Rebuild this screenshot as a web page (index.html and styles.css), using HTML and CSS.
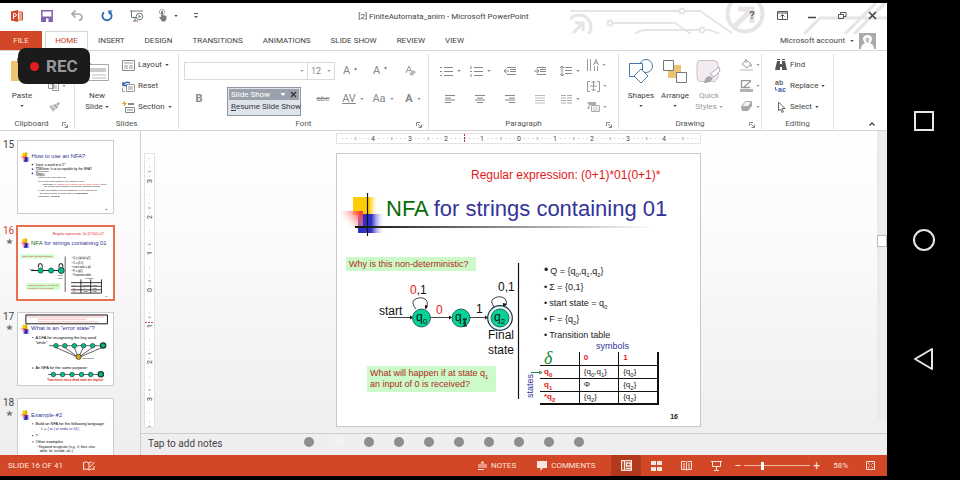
FILE: index.html
```html
<!DOCTYPE html>
<html lang="en">
<head>
<meta charset="utf-8">
<title>FiniteAutomata_anim - Microsoft PowerPoint</title>
<link rel="stylesheet" href="styles.css">
</head>
<body>
<svg class="sprite" aria-hidden="true">
  <symbol id="caret" viewBox="0 0 5 3"><path d="M0 0h5L2.500 3z" fill="currentColor"/></symbol>
  <symbol id="launch" viewBox="0 0 6 6"><path d="M.5 4V.5H4M2 2l3 3M5.500 2.500v3h-3" fill="none" stroke="currentColor"/></symbol>
  <symbol id="star" viewBox="0 0 10 10"><path d="M5 .5l1.300 3H10L7.200 5.600l1 3.400L5 7.200 1.800 9l1-3.400L0 3.500h3.700z" fill="currentColor"/></symbol>
  <symbol id="motif" viewBox="0 0 44 44">
    <rect x="12" y="5" width="25" height="18" fill="url(#gy)"/>
    <rect x="17" y="22" width="27" height="19" fill="url(#gb)"/>
    <rect x="0" y="19" width="22" height="17" fill="url(#gr)"/>
    <path d="M26.500 1v43" stroke="#111" stroke-width="1.200"/>
  </symbol>
</svg>
<svg class="sprite" aria-hidden="true">
  <defs>
    <linearGradient id="gy"><stop offset=".65" stop-color="#fecb05"/><stop offset="1" stop-color="#fff6c8" stop-opacity="0"/></linearGradient>
    <linearGradient id="gb"><stop offset=".5" stop-color="#3030c8"/><stop offset="1" stop-color="#fff" stop-opacity="0"/></linearGradient>
    <linearGradient id="gr" x1="1" y1="0" x2="0" y2=".6"><stop offset=".1" stop-color="#ff3838"/><stop offset="1" stop-color="#fff" stop-opacity="0"/></linearGradient>
    <linearGradient id="gl"><stop offset="0" stop-color="#111"/><stop offset=".4" stop-color="#777"/><stop offset="1" stop-color="#fff"/></linearGradient>
  </defs>
</svg>

<div class="app">
  <header class="titlebar">
    <svg class="circuit" viewBox="570 3 317 31" aria-hidden="true">
      <g fill="none" stroke="#e6e4e6" stroke-width="2">
        <path d="M570 11h110M685 11h15l32 22M613 23h62l16 11M635 34q4-4 12-4h52M704 30h6l10 4"/>
        <circle cx="682" cy="11" r="2.500"/><circle cx="610" cy="23" r="2.500"/><circle cx="702" cy="30" r="2.500"/>
        <circle cx="745" cy="14" r="17.500" stroke-width="4"/><circle cx="579" cy="27" r="12" stroke-width="3"/>
        <path d="M735 26l16-16M738 9h14v14" stroke-width="5"/><path d="M573 33l8-8M575 23h8v8" stroke-width="3"/>
        <path d="M804 34l16-16h67M845 34l31-31M854 34l31-31" stroke-width="3"/>
      </g>
    </svg>
    <div class="quick">
      <button aria-label="PowerPoint"><svg width="12" height="12"><path d="M0 1.500L7 0v12L0 10.500z" fill="#d24726"/><path d="M7 2h4.500v8H7M8 4h3M8 6h3M8 8h3" fill="none" stroke="#d24726"/><path d="M2.500 9V3.500h1.300q1.500 0 1.500 1.500T3.800 6.500H2.500" fill="none" stroke="#fff"/></svg></button>
      <button aria-label="Save"><svg width="12" height="12"><path d="M.8.8h10.400v10.400H.8z" fill="#fff" stroke="#8462ad" stroke-width="1.500"/><path d="M1 6.500h10V11H1z" fill="#8462ad"/><path d="M5 8.500h2.500V12H5z" fill="#fff"/></svg></button>
      <button aria-label="Undo"><svg width="12" height="12"><path d="M4.500.5L1 4l3.500 3.500M1 4h6q4 0 4 3t-3 3.500" fill="none" stroke="#aaa" stroke-width="1.700"/></svg></button>
      <button aria-label="Repeat"><svg width="12" height="12"><path d="M3 2.200a4.600 4.600 0 1 0 6 0" fill="none" stroke="#2f6db5" stroke-width="1.800"/><path d="M7 .5h4.500L8 5z" fill="#2f6db5"/></svg></button>
      <button aria-label="Start from beginning"><svg width="14" height="12"><path d="M0 1h13M1.500 1v6.500H6M5 8v3M3 11h5" fill="none" stroke="#777"/><circle cx="9.500" cy="6.500" r="3.300" fill="#fff" stroke="#777"/><path d="M8.500 4.700l3 1.800-3 1.800z" fill="#5c9a78"/></svg></button>
      <button class="touch" aria-label="Touch mode"><svg width="10" height="13"><path d="M3 8V2.500q1-1.500 2 0V6l3.500 1v3L7 12.500H4L1 8z" fill="#7c7c80"/><circle cx="4" cy="3" r="2.600" fill="none" stroke="#aaa"/></svg><svg class="caret"><use href="#caret"/></svg></button>
      <button class="more" aria-label="Customize"><svg width="5" height="6"><path d="M0 .5h4" stroke="#555"/><path d="M0 3h4L2 5z" fill="#555"/></svg></button>
    </div>
    <h1>[2] FiniteAutomata_anim - Microsoft PowerPoint</h1>
    <div class="window">
      <button class="help">?</button>
      <button aria-label="Ribbon display"><svg width="11" height="9"><path d="M.5.5h10v8H.5zM.5 2h10M5.500 8V4M3.500 5.500l2-2 2 2" fill="none" stroke="#555"/></svg></button>
      <button aria-label="Minimize"><svg width="9" height="9"><path d="M0 6.500h8" stroke="#444" stroke-width="1.500"/></svg></button>
      <button aria-label="Restore"><svg width="9" height="8"><path d="M.5 2.500h5v4h-5zM2.500 2V.5h5.500v4H6" fill="none" stroke="#555"/></svg></button>
      <button aria-label="Close"><svg width="9" height="9"><path d="M1 1l7 7M8 1L1 8" stroke="#444" stroke-width="1.500"/></svg></button>
    </div>
  </header>

  <nav class="tabs">
    <button class="file">FILE</button><button class="on">HOME</button><button>INSERT</button><button>DESIGN</button><button>TRANSITIONS</button><button>ANIMATIONS</button><button>SLIDE SHOW</button><button>REVIEW</button><button>VIEW</button>
    <button class="account">Microsoft account <svg class="caret"><use href="#caret"/></svg>
      <svg width="17" height="16"><path d="M0 0h17v16H0z" fill="#aaa"/><path d="M2 16q0-5 4-5.500Q4 8 4 5.500 4.500 2 8.500 2T13 5.500q0 2.500-2 5 4 .5 4 5.500z" fill="#fff"/><path d="M6.500 7.500V5q2 0 2.500-1 .5 1 1.500 1.500v2Q10 10 8.500 10T6.500 7.500z" fill="#c6c6c6"/></svg></button>
  </nav>

  <section class="ribbon">
    <div class="group clipboard">
      <div class="body">
        <button class="big paste"><svg width="24" height="26"><path d="M1 3h20v20H1z" fill="#ecc573"/><path d="M7 0h8v5H7z" fill="#777"/></svg><span>Paste</span><svg class="caret"><use href="#caret"/></svg></button>
        <div class="stack">
          <button aria-label="Cut"><svg width="11" height="10"><path d="M2 1l6 8M9 1L3 9" stroke="#bbb"/></svg></button>
          <button class="dim" aria-label="Copy"><svg width="11" height="10"><path d="M.5.5h5v7h-5zM4.500 2.500h6v7h-6zM6 5h3M6 7h3M2 3h2" fill="none" stroke="currentColor"/></svg><svg class="caret"><use href="#caret"/></svg></button>
          <button class="dim" aria-label="Format painter"><svg width="12" height="10"><path d="M1 4l3-1 4 4-3 3z" fill="#c3bfc1"/><path d="M5 3l2-1 3 3-1 2zM8 2l3-2 .8 1L10 4z" fill="#a9a6a8"/></svg></button>
        </div>
      </div>
      <h2>Clipboard<svg class="launch"><use href="#launch"/></svg></h2>
    </div>
    <div class="group slides">
      <div class="body">
        <button class="big"><svg width="26" height="26"><path d="M2.500 6.500h22v16h-22z" fill="#fff" stroke="#aaa"/><path d="M5 10h17v4H5z" fill="#ccc"/><path d="M8 17h14M8 20h14" stroke="#bbb"/><path d="M3 2v7M0 5.500h7M1 3l5 5" stroke="#e8a94a"/></svg><span>New<br>Slide <svg class="caret"><use href="#caret"/></svg></span></button>
        <div class="stack wide">
          <button><svg width="13" height="11"><path d="M.5.5h12v10H.5z" fill="#fff" stroke="#8a8a8a"/><path d="M2 3h9M2 6h4M2 8h4" stroke="#999"/><path d="M7 5h4v4H7z" fill="#ccc"/></svg>Layout <svg class="caret"><use href="#caret"/></svg></button>
          <button><svg width="13" height="11"><path d="M4.500 3.500h8v7h-8zM6 6h5M6 8h5M.5 6.500v4H3" fill="none" stroke="#999"/><path d="M1 5V1M1 4.500h4M1 4q3-4 7-2" fill="none" stroke="#2f6db5" stroke-width="1.500"/></svg>Reset</button>
          <button><svg width="13" height="12"><path d="M3.500 6.500h9v5h-9zM5 9h6" fill="none" stroke="#888"/><path d="M6 3h6" stroke="#888" stroke-width="2"/><path d="M2.500 0v5M0 2.500h5M1 1l3 3" stroke="#e8a94a"/></svg>Section <svg class="caret"><use href="#caret"/></svg></button>
        </div>
      </div>
      <h2>Slides</h2>
    </div>
    <div class="group font">
      <div class="body rows">
        <div class="row">
          <label class="combo name"><select aria-label="Font"><option></option></select><svg class="caret"><use href="#caret"/></svg></label><label class="combo size"><select aria-label="Font size"><option>12</option></select><svg class="caret"><use href="#caret"/></svg></label>
          <button class="glyph">A<sup>▴</sup></button><button class="glyph">A<sup>▾</sup></button><button aria-label="Clear formatting"><svg width="11" height="12"><path d="M1 8l3-7 3 7M2 5.500h4" fill="none" stroke="#999"/><path d="M4 9l4-4 3 2-4 4z" fill="#b9b5b7"/></svg></button>
        </div>
        <div class="row">
          <button class="glyph bold">B</button>
          <button class="strike">abc</button><button class="glyph av">AV <svg class="caret"><use href="#caret"/></svg></button><button class="glyph">Aa <svg class="caret"><use href="#caret"/></svg></button><button class="glyph bold">A <svg class="caret"><use href="#caret"/></svg></button>
        </div>
        <div class="floatbar">
          <div class="floathead">Slide Show<svg class="caret"><use href="#caret"/></svg><svg width="7" height="7"><path d="M1 1l5 5M6 1L1 6" stroke="#333" stroke-width="1.200"/></svg></div>
          <button><span><u>R</u>esume Slide Show</span></button>
        </div>
      </div>
      <h2>Font<svg class="launch"><use href="#launch"/></svg></h2>
    </div>
    <div class="group paragraph">
      <div class="body">
        <div class="rows">
          <div class="row">
            <button aria-label="Bullets"><svg width="13" height="11"><path d="M4 1.500h9M4 5.500h9M4 9.500h9M0 1.500h2M0 5.500h2M0 9.500h2" stroke="currentColor"/></svg><svg class="caret"><use href="#caret"/></svg></button>
            <button aria-label="Numbering"><svg width="13" height="11"><path d="M4 1.500h9M4 5.500h9M4 9.500h9M1 0v3M0 5.500h2M1 8v3" stroke="currentColor"/></svg><svg class="caret"><use href="#caret"/></svg></button>
            <button aria-label="Decrease indent"><svg width="12" height="8"><path d="M3 .5h9M6 2.500h6M6 4.500h6M3 7.500h9M0 4h5M2.500 1.500L0 4l2.500 2.500" fill="none" stroke="currentColor"/></svg></button>
            <button aria-label="Increase indent"><svg width="12" height="8"><path d="M3 .5h9M6 2.500h6M6 4.500h6M3 7.500h9M0 4h5M2.500 1.500L5 4 2.500 6.500" fill="none" stroke="currentColor"/></svg></button>
            <button aria-label="Line spacing"><svg width="12" height="12"><path d="M5 2.500h7M5 5.500h7M5 8.500h7M2 1v10M0 3l2-2 2 2M0 9l2 2 2-2" fill="none" stroke="currentColor"/></svg><svg class="caret"><use href="#caret"/></svg></button>
          </div>
          <div class="row">
            <button aria-label="Align left"><svg width="10" height="8"><path d="M0 .5h10M0 3h6M0 5h10M0 7.500h6" stroke="currentColor"/></svg></button>
            <button aria-label="Center"><svg width="10" height="8"><path d="M0 .5h10M2 3h6M0 5h10M2 7.500h6" stroke="currentColor"/></svg></button>
            <button aria-label="Align right"><svg width="10" height="8"><path d="M0 .5h10M4 3h6M0 5h10M4 7.500h6" stroke="currentColor"/></svg></button>
            <button aria-label="Justify"><svg width="10" height="9"><path d="M0 .5h10M0 3h10M0 5.500h10M0 8h10" stroke="#bbb"/></svg></button>
            <button aria-label="Columns"><svg width="11" height="9"><path d="M0 .5h5M0 3h5M0 5.500h5M0 8h5M6 .5h5M6 3h5M6 5.500h5M6 8h5" stroke="#aaa"/></svg><svg class="caret"><use href="#caret"/></svg></button>
          </div>
        </div>
        <div class="stack">
          <button aria-label="Text direction"><svg width="12" height="13"><path d="M.5 0v12M3.500 0v12M7.500 7v5M10.500 7v5M6.500 6L9 .5 11.500 6M7 4h4" fill="none" stroke="currentColor"/></svg><svg class="caret"><use href="#caret"/></svg></button>
          <button aria-label="Align text"><svg width="13" height="11"><path d="M3 .5H.5v10H3M10 .5h2.500v10H10M6.500 0v10M4.500 2l2-2 2 2M4.500 8l2 2 2-2M3 5h7" fill="none" stroke="currentColor"/></svg><svg class="caret"><use href="#caret"/></svg></button>
          <button aria-label="SmartArt"><svg width="13" height="11"><path d="M0 1h9v3H3l-1 4H0l2-4z" fill="#aaa"/><path d="M4.500 4.500h8v6h-8z" fill="#f6eff4" stroke="#aaa"/><path d="M6 7h5M6 9h5" stroke="#ccc"/></svg><svg class="caret"><use href="#caret"/></svg></button>
        </div>
      </div>
      <h2>Paragraph<svg class="launch"><use href="#launch"/></svg></h2>
    </div>
    <div class="group drawing">
      <div class="body">
        <button class="big"><svg width="24" height="26"><g fill="#fff" stroke="#4878a8"><circle cx="17" cy="8" r="6.500"/><path d="M.5 5.500h13v13H.5z"/><path d="M12 11l7 7-7 7-7-7z"/></g></svg><span>Shapes</span><svg class="caret"><use href="#caret"/></svg></button>
        <button class="big"><svg width="24" height="26"><path d="M9 7h9v7H9zM5 12h9v8H5z" fill="#eac374"/><path d="M.5 2.500h10v10H.5zM13.500 14.500h10v10h-10z" fill="#fff" stroke="#777"/></svg><span>Arrange</span><svg class="caret"><use href="#caret"/></svg></button>
        <button class="big faded"><svg width="26" height="26"><path d="M4 2.500h14q4 0 4 4v13l-3 4H5q-4 0-4-4v-13q0-4 3-4z" fill="#f3ebf2" stroke="#c9c0c8"/><path d="M8 25q1-6 5-7l4 2q-2 5-9 5z" fill="#aaa5a9"/><path d="M14 16l9-7 1 4-6 6z" fill="#fff" stroke="#aaa"/></svg><span>Quick<br>Styles <svg class="caret"><use href="#caret"/></svg></span></button>
        <div class="stack">
          <button aria-label="Shape fill"><svg width="13" height="12"><path d="M6 1l5 4-4 4-5-4zM6 0v4M11 5v3" fill="none" stroke="currentColor"/><path d="M0 10h13v2H0z" fill="#ddd8dc"/></svg><svg class="caret"><use href="#caret"/></svg></button>
          <button aria-label="Shape outline"><svg width="13" height="12"><path d="M11 .5H1.500v7H10M4 7l7-6" fill="none" stroke="currentColor" stroke-width="1.300"/><path d="M0 9h13v3H0z" fill="#b5b0b3"/></svg><svg class="caret"><use href="#caret"/></svg></button>
          <button aria-label="Shape effects"><svg width="13" height="11"><path d="M1 6l4-5h7v4L8 10H2z" fill="#aaa5a8"/><path d="M1.500 5.500l4-5h6l-3 5z" fill="#f4f1f3" stroke="#aaa"/></svg><svg class="caret"><use href="#caret"/></svg></button>
        </div>
      </div>
      <h2>Drawing<svg class="launch"><use href="#launch"/></svg></h2>
    </div>
    <div class="group editing">
      <div class="body">
        <div class="stack wide">
          <button><svg width="12" height="12"><path d="M0 11l2-9h3v3h2V2h3l2 9H7V8H5v3zM2 0h3v1H2zM7 0h3v1H7z" fill="#555"/></svg>Find</button>
          <button><svg width="12" height="12"><text x="0" y="5" class="mini">ab</text><text x="3" y="12" class="mini blue">ac</text><path d="M.5 7v3h2" fill="none" stroke="#4878b8"/></svg>Replace<svg class="caret"><use href="#caret"/></svg></button>
          <button><svg width="12" height="12"><path d="M3.500 1v9l2-2 1.500 3.500 1.500-.8L7 7.500h3z" fill="#fff" stroke="#666"/></svg>Select<svg class="caret"><use href="#caret"/></svg></button>
        </div>
      </div>
      <h2>Editing</h2>
    </div>
    <button class="collapse" aria-label="Collapse ribbon"><svg width="6" height="4"><path d="M.5 3.500L3 1l2.500 2.500" fill="none" stroke="#444" stroke-width="1.300"/></svg></button>
  </section>

  <main class="work">
    <ol class="thumbs">
      <li><div class="num">15</div>
        <svg class="thumb" viewBox="0 0 290 220" role="img" aria-label="How to use an NFA?">
          <use href="#motif" x="4" y="32" width="34" height="34"/><path d="M12 61h218" stroke="url(#gl)" stroke-width="2"/>
          <text x="41" y="53" class="t-title">How to use an NFA?</text>
          <g fill="#2b2bb0"><circle cx="44" cy="72" r="2.500"/><circle cx="44" cy="86" r="2.500"/><circle cx="44" cy="99" r="2.500"/></g>
          <g class="t-body"><text x="54" y="77"><tspan text-decoration="underline">Input</tspan>: a word w in Σ*</text><text x="54" y="90"><tspan text-decoration="underline">Question</tspan>: Is w acceptable by the NFA?</text><text x="54" y="103" text-decoration="underline">Steps:</text></g>
          <g class="t-fine"><text x="60" y="114">• Start at the &quot;start state&quot; q0</text><text x="60" y="125">• For every input symbol in the sequence w do</text><text x="72" y="135">◦ Determine <tspan class="r">all possible next states from all current states</tspan>, given</text><text x="80" y="142">the current input symbol in w and the transition function</text><text x="60" y="153">• If after all symbols in w are consumed <tspan class="r">and</tspan> at least one of</text><text x="66" y="161">the current states is a final state then <tspan font-weight="bold">accept w</tspan>;</text><text x="60" y="171">• Otherwise, <tspan font-weight="bold">reject w</tspan>.</text><text x="266" y="212">15</text></g>
        </svg></li>
      <li class="current"><div class="num">16<svg class="mark"><use href="#star"/></svg></div>
        <svg class="thumb" viewBox="0 0 290 220" role="img" aria-label="NFA for strings containing 01">
          <text x="106" y="24" class="t-reg r">Regular expression: (0+1)*01(0+1)*</text>
          <use href="#motif" x="4" y="32" width="34" height="34"/><path d="M12 61h248" stroke="url(#gl)" stroke-width="2"/>
          <text x="40" y="54" class="t-title"><tspan fill="#0a6b0a">NFA</tspan> for strings containing 01</text>
          <path d="M8 84h104v12H8zM26 172h103v19H26z" fill="#ccfac9"/>
          <text x="12" y="93" class="t-fine r">Why is this non-deterministic?</text><text x="30" y="180" class="t-fine r">What will happen if at state q1</text><text x="30" y="188" class="t-fine r">an input of 0 is received?</text>
          <path d="M144 90v108" stroke="#111" stroke-width="2"/><path d="M40 133h90M62 124q-2-12 6-12t6 12M125 124q-2-12 6-12t6 12" fill="none" stroke="#111" stroke-width="3"/>
          <g fill="#06bd88" stroke="#173b35" stroke-width="2"><circle cx="69" cy="133" r="8"/><circle cx="101" cy="133" r="8"/><circle cx="132" cy="133" r="9" stroke-width="3"/></g>
          <g class="t-fine"><text x="34" y="131">start</text><text x="62" y="112">0,1</text><text x="126" y="112">0,1</text><text x="121" y="150">Final</text><text x="121" y="160">state</text></g>
          <g class="t-facts"><text x="164" y="99">• Q = {q0,q1,q2}</text><text x="164" y="113">• Σ = {0,1}</text><text x="164" y="126">• start state = q0</text><text x="164" y="139">• F = {q2}</text><text x="164" y="151">• Transition table</text></g>
          <g class="t-fine"><text x="205" y="159">symbols</text><text x="167" y="180" class="r">q0</text><text x="167" y="190" class="r">q1</text><text x="167" y="200" class="r">q2</text><text x="198" y="179">{q0,q1}</text><text x="228" y="179">{q0}</text><text x="200" y="190">Φ</text><text x="228" y="190">{q2}</text><text x="200" y="200">{q2}</text><text x="228" y="200">{q2}</text><text x="266" y="213">16</text></g>
          <path d="M162 170h93M162 181h93M162 192h93M162 202h93M192 160v42M222 160v42M255 160v42" stroke="#111" stroke-width="2.500"/>
        </svg></li>
      <li><div class="num">17<svg class="mark"><use href="#star"/></svg></div>
        <svg class="thumb" viewBox="0 0 290 220" role="img" aria-label="What is an error state?">
          <path d="M24 6h249v27H24z" fill="#fff" stroke="#111" stroke-width="3"/><path d="M29 12h236M60 19h150M60 27h185" stroke="#f08080" stroke-width="2" stroke-dasharray="5 1"/>
          <use href="#motif" x="4" y="32" width="34" height="34"/><path d="M12 61h248" stroke="url(#gl)" stroke-width="2"/>
          <text x="40" y="53" class="t-title">What is an &quot;error state&quot;?</text>
          <circle cx="45" cy="75" r="2" fill="#2b2bb0"/><circle cx="45" cy="168" r="2" fill="#2b2bb0"/>
          <text x="53" y="79" class="t-list">A DFA for recognizing the key word</text><text x="53" y="94" class="t-list">&quot;while&quot;</text><text x="53" y="171" class="t-list">An NFA for the same purpose:</text>
          <path d="M95 100h160M92 188h155M115 105l68 30M143 105l40 30M172 105l12 30M200 105l-15 30M228 105l-42 30M258 105l-70 30" stroke="#111" stroke-width="2"/>
          <g fill="#06bd88" stroke="#173b35" stroke-width="2"><circle cx="116" cy="100" r="7"/><circle cx="143" cy="100" r="7"/><circle cx="172" cy="100" r="7"/><circle cx="200" cy="100" r="7"/><circle cx="228" cy="100" r="7"/><circle cx="260" cy="99" r="8" stroke-width="4"/><circle cx="108" cy="188" r="7"/><circle cx="136" cy="188" r="7"/><circle cx="165" cy="188" r="7"/><circle cx="194" cy="188" r="7"/><circle cx="222" cy="188" r="7"/><circle cx="253" cy="187" r="8" stroke-width="4"/></g>
          <circle cx="185" cy="134" r="8" fill="#d8a51c" stroke="#222" stroke-width="2"/><text x="196" y="142" class="t-fine">any symbol</text>
          <text x="89" y="208" class="t-note">Transitions into a dead state are implicit</text>
        </svg></li>
      <li><div class="num">18<svg class="mark"><use href="#star"/></svg></div>
        <svg class="thumb" viewBox="0 0 290 220" role="img" aria-label="Example #2">
          <use href="#motif" x="4" y="32" width="34" height="34"/><path d="M12 61h248" stroke="url(#gl)" stroke-width="2"/>
          <text x="40" y="54" class="t-title">Example #2</text>
          <g fill="#2b2bb0"><circle cx="45" cy="76" r="2"/><circle cx="45" cy="112" r="2"/><circle cx="45" cy="131" r="2"/></g>
          <g class="t-list"><text x="53" y="79">Build an NFA for the following language:</text><text x="70" y="94" fill="#33339a">L = { w | w ends in 01}</text><text x="53" y="116">?</text><text x="53" y="134">Other examples</text></g>
          <g class="t-sub"><text x="58" y="150"><tspan class="r">•</tspan> Keyword recognizer (e.g., if, then, else,</text><text x="66" y="163">while, for, include, etc.)</text></g>
        </svg></li>
    </ol>
    <div class="editor">
      <div class="canvas">
        <svg class="vruler" viewBox="0 0 9 273" aria-hidden="true">
          <defs><pattern id="vt" y="9.200" width="9" height="36.400" patternUnits="userSpaceOnUse"><path d="M3 8.500h3" stroke="#999"/><path d="M4 4h1M4 13h1M4 17.500h1M4 31.500h1" stroke="#bbb"/></pattern></defs>
          <path d="M0 0h9v273H0z" fill="#fff"/><path d="M0 0h9v273H0z" fill="url(#vt)"/>
          <g class="nums"><text transform="translate(7 27) rotate(-90)">3</text><text transform="translate(7 63) rotate(-90)">2</text><text transform="translate(7 99) rotate(-90)">1</text><text transform="translate(7 136) rotate(-90)">0</text><text transform="translate(7 172) rotate(-90)">1</text><text transform="translate(7 208) rotate(-90)">2</text><text transform="translate(7 245) rotate(-90)">3</text></g>
          <path d="M0 168.500h9" stroke="#c0506a" stroke-dasharray="2 1"/>
        </svg>
        <div class="stage">
          <svg class="hruler" viewBox="0 0 363 9" aria-hidden="true">
            <defs><pattern id="ht" x="0" width="36.400" height="9" patternUnits="userSpaceOnUse"><path d="M18.500 3v3" stroke="#999"/><path d="M5.500 4v1M9.500 4v1M14 4v1M23 4v1M27.500 4v1M31.500 4v1" stroke="#bbb"/></pattern></defs>
            <path d="M0 0h363v9H0z" fill="#fff"/><path d="M0 0h363v9H0z" fill="url(#ht)"/>
            <g class="nums"><text x="36" y="7">4</text><text x="73" y="7">3</text><text x="109" y="7">2</text><text x="145" y="7">1</text><text x="182" y="7">0</text><text x="218" y="7">1</text><text x="255" y="7">2</text><text x="291" y="7">3</text><text x="327" y="7">4</text></g>
            <path d="M127.500 0v9" stroke="#b0304a" stroke-dasharray="2 1"/>
          </svg>
          <article class="slide">
            <svg class="art" viewBox="336 153 365 274">
              <use href="#motif" x="341" y="192" width="44" height="44"/>
              <path d="M355 226h300v2H355z" fill="url(#gl)"/>
              <path d="M518.500 263v136" stroke="#111" stroke-width="1.200"/>
              <g fill="none" stroke="#111" stroke-width=".8"><path d="M388 317.500h24M431 317.500h20M470 317.500h17"/><path d="M416 309q-5-6-2-9 6-4 11-1 4 2 1 10M494 307q-4-6-1-8 6-4 11-1 5 4 0 9"/></g>
              <path d="M413 317.500l-3-2v4zM452 317.500l-3-2v4zM488 317.500l-3-2v4zM425 309v-4l3 1zM503 307v-4l4 1z" fill="#111"/>
              <circle cx="500" cy="318" r="12.300" fill="#e8f8f4" stroke="#183850" stroke-width="1.200"/>
              <g fill="#06d297" stroke="#184a48" stroke-width=".8"><circle cx="421.500" cy="318" r="9"/><circle cx="461" cy="318" r="9"/><circle cx="500" cy="318" r="9"/></g>
              <g class="diagram">
                <text x="379" y="315">start</text><text x="410" y="294"><tspan class="r">0</tspan>,1</text><text x="436" y="314" class="r">0</text><text x="476" y="313">1</text><text x="498" y="291">0,1</text>
                <text x="416" y="321">q<tspan dy="3" class="s">0</tspan></text><text x="455" y="321">q<tspan dy="3" class="s">1</tspan></text><text x="494" y="321">q<tspan dy="3" class="s">2</tspan></text>
                <text x="488" y="339">Final</text><text x="488" y="354">state</text>
              </g>
              <path d="M463 319h4M463 326h4M465 319v7" stroke="#111" stroke-width="1.200"/>
              <path d="M531 372.500h9M539 371l3 1.500-3 1.500" stroke="#2c8056" fill="none"/>
            </svg>
            <p class="regex">Regular expression: (0+1)*01(0+1)*</p>
            <h3><em>NFA</em> for strings containing 01</h3>
            <p class="callout why">Why is this non-deterministic?</p>
            <p class="callout what">What will happen if at state q<sub>1</sub><br>an input of 0 is received?</p>
            <ul class="facts">
              <li>Q = {q<sub>0</sub>,q<sub>1</sub>,q<sub>2</sub>}</li><li>Σ = {0,1}</li><li>start state = q<sub>0</sub></li><li>F = {q<sub>2</sub>}</li><li>Transition table</li>
            </ul>
            <p class="axis symbols">symbols</p>
            <p class="axis states">states</p>
            <table>
              <tr><th class="delta">δ</th><th>0</th><th>1</th></tr>
              <tr><th>q<sub>0</sub></th><td>{q<sub>0</sub>,q<sub>1</sub>}</td><td>{q<sub>0</sub>}</td></tr>
              <tr><th>q<sub>1</sub></th><td>Φ</td><td>{q<sub>2</sub>}</td></tr>
              <tr><th>*q<sub>2</sub></th><td>{q<sub>2</sub>}</td><td>{q<sub>2</sub>}</td></tr>
            </table>
            <p class="page">16</p>
          </article>
        </div>
        <div class="scroll"><span></span></div>
      </div>
      <div class="notes">Tap to add notes</div>
    </div>
  </main>

  <footer class="status">
    <span>SLIDE 16 OF 41</span>
    <button aria-label="Spelling"><svg width="12" height="10"><path d="M6 2Q3 0 .5 1.500v7Q3 7 6 9 8 7 11 8.500V5M6 2v7M6 2q2-1 3-1M7 6l4.500-5" fill="none" stroke="currentColor"/></svg></button>
    <button class="push"><svg width="9" height="9"><path d="M2.500 2.500L4.500 0l2 2.500z" fill="currentColor"/><path d="M0 4h9M0 6h9M0 8.500h6" stroke="currentColor"/></svg>NOTES</button>
    <button class="comments"><svg width="10" height="10"><path d="M0 0h10v7H6L3.500 10V7H0z" fill="currentColor"/></svg>COMMENTS</button>
    <button class="view on" aria-label="Normal view"><svg width="11" height="11"><path d="M.5.5h10v10H.5zM3.500 0v11M5.500 3h4v3h-4zM5 8.500h5" fill="none" stroke="currentColor" stroke-width="1.400"/></svg></button>
    <button class="view" aria-label="Slide sorter"><svg width="11" height="10"><path d="M0 0h5v4H0zM6 0h5v4H6zM0 6h5v4H0zM6 6h5v4H6z" fill="currentColor"/></svg></button>
    <button class="view" aria-label="Reading view"><svg width="11" height="10"><path d="M.5.5h4l1 1 1-1h4v8h-4l-1 1-1-1h-4zM5.500 1v8M2 3h2M2 5h2M2 7h2M7 3h2M7 5h2M7 7h2" fill="none" stroke="currentColor"/></svg></button>
    <button class="view" aria-label="Slide show"><svg width="11" height="10"><path d="M0 .5h11M1.500 1v4.500h8V1M5.500 6v3M3 9.500h5" fill="none" stroke="currentColor"/></svg></button>
    <label class="zoom">−<input type="range" aria-label="Zoom" min="0" max="100" value="27">+</label>
    <span class="pct">58%</span>
    <button aria-label="Fit slide"><svg width="9" height="9"><path d="M.5.5h8v8h-8zM2 2l1.500 1.500M7 2L5.500 3.500M2 7l1.500-1.500M7 7L5.500 5.500" fill="none" stroke="currentColor"/></svg></button>
  </footer>

  <div class="rec"><i></i>REC</div>
  <div class="pager" aria-hidden="true"><i></i><i class="pale"></i><i></i><i></i><i></i><i></i><i></i><i></i><i></i><i></i></div>
</div>

<aside class="sysnav">
  <button aria-label="Recent apps"><svg width="24" height="24"><path d="M3 3h18v18H3z" fill="none" stroke="#e6e6e6" stroke-width="2"/></svg></button>
  <button aria-label="Home"><svg width="24" height="24"><circle cx="12" cy="12" r="10" fill="none" stroke="#e6e6e6" stroke-width="2"/></svg></button>
  <button aria-label="Back"><svg width="24" height="24"><path d="M20 2v20L3 12z" fill="none" stroke="#e6e6e6" stroke-width="2" stroke-linejoin="round"/></svg></button>
</aside>
</body>
</html>
```
FILE: styles.css
```css
* { box-sizing: border-box; margin: 0; padding: 0; }
body { display: flex; height: 100vh; padding: 3px 0 4px; background: #000; font: 8px/12px Roboto, "Noto Sans", sans-serif; color: #444; overflow: hidden; }
button { border: 0; background: none; font: inherit; color: inherit; display: flex; align-items: center; justify-content: center; white-space: nowrap; }
svg { flex: none; }
.sprite { position: absolute; width: 0; height: 0; }
.caret { width: 4px; height: 2px; }
.launch { width: 6px; height: 6px; color: #888; }

.app { position: relative; flex: 1; min-width: 0; display: flex; flex-direction: column; background: #fff; overflow: hidden; }

.titlebar { position: relative; display: grid; grid-template-columns: 1fr auto 1fr; align-items: center; height: 28px; }
.titlebar > * { position: relative; }
.titlebar .circuit { position: absolute; right: 0; top: 0; width: 317px; height: 31px; }
.titlebar h1 { font-size: 8px; font-weight: 400; color: #444; }
.quick { display: flex; padding-bottom: 3px; padding-left: 2px; }
.quick button { width: 30px; height: 18px; gap: 6px; }
.quick .touch { width: 32px; }
.quick .more { width: 24px; }
.window { display: flex; justify-content: flex-end; padding-bottom: 3px; }
.window button { width: 30px; height: 18px; }
.window .help { font-size: 11px; font-weight: 700; color: #666; }

.tabs { position: relative; display: flex; height: 20px; border-bottom: 1px solid #d8d5d8; }
.tabs button { padding: 0 10px; }
.tabs .file { width: 42px; margin-right: 3px; background: #d24726; color: #fbe3dc; }
.tabs .on { width: 43px; height: 20px; border: 1px solid #d8d5d8; border-bottom-color: #fff; color: #c43e1c; }
.tabs .account { margin-left: auto; padding-right: 11px; gap: 5px; }

.ribbon { display: flex; height: 80px; padding-top: 3px; border-bottom: 1px solid #d4d1d4; }
.group { display: flex; flex-direction: column; justify-content: space-between; border-right: 1px solid #e2dfe2; margin-bottom: 1px; }
.group h2 { position: relative; font-size: 8px; line-height: 10px; font-weight: 400; text-align: center; color: #555; }
.group h2 .launch { position: absolute; right: 6px; top: 3px; }
.clipboard h2 { padding-right: 11px; }
.body { display: flex; height: 63px; padding-top: 1px; }
.clipboard { width: 75px; }
.slides { width: 104px; }
.font { width: 250px; }
.paragraph { width: 190px; }
.drawing { width: 143px; }
.editing { width: 72px; }
.big { flex-direction: column; justify-content: flex-start; width: 34px; padding-top: 3px; line-height: 11px; color: #444; }
.big > svg:first-child { margin-bottom: 6px; }
.big > .caret { margin-top: 4px; }
.big .caret { vertical-align: middle; }
.faded { color: #999; }
.clipboard .big { width: 44px; }
.slides .big { width: 44px; }
.stack { display: flex; flex-direction: column; }
.stack button { height: 21px; gap: 3px; justify-content: flex-start; color: #999; }
.stack.wide button { color: #444; }
.clipboard .stack { padding-left: 4px; }
.slides .stack { padding-left: 3px; }
.drawing .body { padding-left: 5px; }
.drawing .stack { padding-left: 14px; }
.drawing .big { flex: none; }
.editing .stack { padding-left: 13px; }
.mini { font: 700 7px "Liberation Sans", sans-serif; fill: #666; }
.blue { fill: #4060a8; }
.rows { display: flex; flex-direction: column; position: relative; }
.row { display: flex; height: 28px; align-items: center; color: #888; }
.rows .row:first-child { margin-top: 2px; }
.body.rows { padding-left: 5px; }
.row button { width: 30px; height: 24px; gap: 4px; }
.paragraph .body { padding-left: 6px; }
.paragraph .rows .row { width: 152px; }
.glyph { font-size: 11px; }
.glyph sup { font-size: 6px; line-height: 6px; margin-bottom: 6px; }
.bold { font-weight: 700; }
.av { text-decoration: underline; }
.strike { margin-left: auto; text-decoration: line-through; }
.combo { display: flex; align-items: center; height: 18px; border: 1px solid #dcd8dc; color: #999; padding-right: 3px; }
.combo select { flex: 1; min-width: 0; appearance: none; border: 0; background: none; font: inherit; font-size: 9px; color: #888; padding-left: 3px; }
.name { width: 124px; }
.size { width: 27px; border-left: 0; }
.floatbar { position: absolute; left: 48px; top: 33px; width: 74px; height: 29px; padding: 1px; border: 1px solid #8f97a5; background: #dfe3ea; color: #33384a; }
.floathead { display: flex; align-items: center; gap: 4px; height: 11px; padding: 0 2px; background: #9aa1ad; color: #fff; }
.floathead .caret { margin-left: auto; width: 6px; height: 3px; }
.floatbar button { height: 14px; padding-left: 2px; }
.collapse { margin: auto 12px 4px auto; }

.work { flex: 1; min-height: 0; display: flex; background: linear-gradient(#fff 0, #fdfcfd 25%, #f4f3f6 65%, #efedef); }
.thumbs { list-style: none; width: 141px; padding-top: 9px; border-right: 1px solid #d0ced2; overflow: hidden; }
.thumbs li { display: flex; height: 86px; }
.num { width: 17px; padding-left: 3px; font-size: 10px; line-height: 9px; }
.mark { display: block; width: 7px; height: 7px; margin: 3px 0 0 3px; color: #777; }
.thumb { width: 97px; height: 74px; background: #fff; border: 1px solid #ccc; font-family: "Liberation Sans", Arial, sans-serif; }
.current .num { color: #d24726; }
.current .thumb { border-color: #e9704f; outline: 1px solid #e9704f; }
.t-title { font-size: 18px; fill: #33339a; }
.t-body { font-size: 10px; }
.t-list { font-size: 12px; }
.t-sub { font-size: 10px; }
.t-fine { font-size: 7px; }
.t-facts { font-size: 8px; }
.t-reg { font-size: 10px; }
.t-note { font-size: 9px; font-weight: 700; fill: #e02020; }
.r { fill: #e01818; }

.editor { flex: 1; min-width: 0; display: flex; flex-direction: column; }
.canvas { flex: 1; min-height: 0; display: flex; padding-bottom: 13px; }
.vruler { width: 9px; height: 273px; margin: 23px 0 0 4px; outline: 1px solid #e4e2e5; }
.stage { flex: 1; display: flex; flex-direction: column; align-items: center; padding-left: 6px; }
.hruler { width: 363px; height: 9px; margin: 3px 0 10px; outline: 1px solid #e4e2e5; }
.nums { font: 7px Roboto, sans-serif; fill: #444; text-anchor: middle; }
.scroll { width: 10px; background: #eceaed; padding-top: 104px; }
.scroll span { display: block; height: 12px; background: #fff; border: 1px solid #bbb; }
.notes { height: 22px; border-top: 1px solid #cfcdd0; padding-left: 7px; font-size: 10px; line-height: 20px; }

.slide { position: relative; width: 365px; height: 274px; flex: none; background: #fff; border: 1px solid #c9c7ca; font: 9px/10px "Liberation Sans", Arial, sans-serif; color: #222; }
.slide > * { position: absolute; white-space: nowrap; }
.art { left: -1px; top: -1px; width: 365px; height: 274px; }
.slide sub { font-size: 6px; line-height: 0; }
.diagram { font-size: 12px; fill: #111; }
.diagram .r { fill: #e01818; }
.diagram .s { font-size: 8px; }
.regex { left: 134px; top: 14px; font-size: 12px; line-height: 14px; color: #e01818; }
.slide h3 { left: 49px; top: 42px; font-size: 22px; line-height: 26px; font-weight: 400; color: #33339a; }
.slide h3 em { font-style: normal; color: #0a6b0a; }
.callout { background: #ccfac9; color: #b02a1a; padding: 2px 3px; }
.why { left: 9px; top: 103px; width: 130px; height: 14px; }
.what { left: 30px; top: 212px; width: 129px; height: 26px; line-height: 11px; }
.facts { left: 207px; top: 109px; list-style: none; }
.facts li { height: 16px; line-height: 16px; }
.facts li::before { content: "•"; margin-right: 2px; }
.facts li:first-child::before { font-size: 12px; line-height: 0; }
.axis { color: #33339a; }
.symbols { left: 259px; top: 187px; }
.states { left: 188px; top: 220px; writing-mode: vertical-rl; transform: rotate(180deg); }
.slide table { left: 203px; top: 198px; width: 119px; border-collapse: collapse; table-layout: fixed; border-right: 2px solid #111; border-bottom: 2px solid #111; font-size: 8px; line-height: 10px; }
.slide th, .slide td { height: 13px; padding: 0 4px; border-left: 1px solid #111; border-top: 1px solid #111; text-align: left; }
.slide th { color: #e01818; }
.slide tr:first-child th { border-top: 0; }
.slide tr > :first-child { border-left: 0; }
.slide .delta { font: italic 18px/10px "Liberation Serif", serif; color: #1a8a2a; }
.page { right: 22px; top: 258px; font-size: 7px; font-weight: 700; }

.status { display: flex; align-items: center; height: 21px; padding: 0 12px 0 8px; background: #d24726; color: #fbe6df; }
.status > button:nth-child(2) { margin-left: 20px; }
.status button { gap: 4px; height: 21px; }
.status .push { margin-left: auto; }
.comments { margin: 0 16px 0 21px; }
.view { width: 30px; }
.view.on { background: #b23a1c; }
.zoom { display: flex; align-items: center; gap: 3px; margin-left: 3px; font-size: 12px; }
.zoom input { appearance: none; width: 66px; height: 12px; background: linear-gradient(#f0b8a6, #f0b8a6) center / 100% 1px no-repeat; }
.zoom input::-webkit-slider-thumb { appearance: none; width: 3px; height: 8px; background: #fff; }
.pct { margin: 0 18px 0 13px; }

.rec { position: absolute; left: 18px; top: 45px; width: 72px; height: 36px; display: flex; align-items: center; gap: 7px; padding-left: 12px; border-radius: 8px; background: #1b1b1b; color: #999; font: 700 17px/20px Roboto, sans-serif; }
.rec i { width: 9px; height: 9px; border-radius: 50%; background: #e02020; }
.pager { position: absolute; left: 304px; bottom: 29px; display: flex; gap: 20px; }
.pager i { width: 10px; height: 10px; border-radius: 50%; background: #8e8e8e; }
.pager .pale { background: #f3f2f3; }

.sysnav { width: 73px; display: flex; flex-direction: column; align-items: center; justify-content: center; gap: 95px; }
```
